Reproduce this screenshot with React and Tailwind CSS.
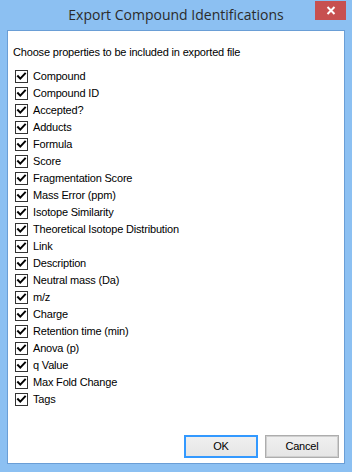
import React from "react";

const items = [
  "Compound",
  "Compound ID",
  "Accepted?",
  "Adducts",
  "Formula",
  "Score",
  "Fragmentation Score",
  "Mass Error (ppm)",
  "Isotope Similarity",
  "Theoretical Isotope Distribution",
  "Link",
  "Description",
  "Neutral mass (Da)",
  "m/z",
  "Charge",
  "Retention time (min)",
  "Anova (p)",
  "q Value",
  "Max Fold Change",
  "Tags",
];

function CheckBox() {
  return (
    <span className="w-[13px] h-[13px] border border-[#333333] bg-white flex items-center justify-center shrink-0">
      <svg width="11" height="11" viewBox="0 0 11 11">
        <path d="M2 5.2 L4.3 7.6 L9 2.6" fill="none" stroke="#000" strokeWidth="2" strokeLinecap="square" />
      </svg>
    </span>
  );
}

export default function App() {
  return (
    <div
      className="w-[352px] h-[472px] bg-[#8cc0f2] flex flex-col px-[7px] pb-[8px] tracking-[-0.18px]"
      style={{ fontFamily: '"Liberation Sans", Arial, sans-serif' }}
    >
      <div className="relative h-[30px] flex items-center justify-center shrink-0">
        <span
          className="text-[14px] text-[#2b2b2b] leading-none tracking-normal"
          style={{ fontFamily: '"Open Sans", "Noto Sans", sans-serif' }}
        >
          Export Compound Identifications
        </span>
        <div className="absolute right-[-1px] top-[1px] w-[31px] h-[19px] bg-[#c75050] flex items-center justify-center">
          <svg width="10" height="9" viewBox="0 0 10 9">
            <path d="M1.5 1 L8.5 8 M8.5 1 L1.5 8" stroke="#fff" strokeWidth="2" />
          </svg>
        </div>
      </div>
      <div className="flex-1 border border-[#6a9ed6] bg-white flex flex-col pl-[5px] pr-[5px]">
        <div className="text-[11px] leading-[13px] text-black mt-[15px]">
          Choose properties to be included in exported file
        </div>
        <div className="flex flex-col mt-[9px] pl-[2px]">
          {items.map((t) => (
            <div key={t} className="h-[17px] flex items-center gap-[5px]">
              <CheckBox />
              <span className="text-[11px] leading-[13px] text-black">{t}</span>
            </div>
          ))}
        </div>
        <div className="flex justify-end gap-[7px] mt-[27px]">
          <button className="w-[74px] h-[23px] border border-[#3399ff] shadow-[inset_0_0_0_1px_#3399ff] bg-gradient-to-b from-[#f0f0f0] to-[#e5e5e5] text-[11px] text-black">
            OK
          </button>
          <button className="w-[74px] h-[23px] border border-[#adadad] shadow-[inset_0_0_0_1px_#cfcfcf] bg-gradient-to-b from-[#f0f0f0] to-[#e5e5e5] text-[11px] text-black">
            Cancel
          </button>
        </div>
      </div>
    </div>
  );
}
